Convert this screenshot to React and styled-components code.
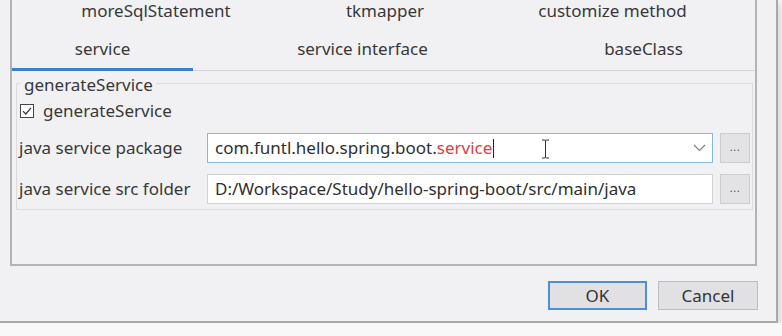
import React from 'react';
import styled, { createGlobalStyle } from 'styled-components';

const GlobalStyle = createGlobalStyle`
  html, body {
    margin: 0;
    padding: 0;
    background: #f8f8f9;
    overflow: hidden;
  }
  body {
    font-family: "Noto Sans", "Open Sans", sans-serif;
    font-size: 17px;
    line-height: 20px;
    color: #333;
  }
  * {
    box-sizing: border-box;
  }
`;

// the dialog's top and left edges are cropped off in the screenshot
const Dialog = styled.div`
  width: 778px;
  height: 323px;
  background: #f1f1f3;
  border-right: 2px solid #a9a9ab;
  border-bottom: 2px solid #a9a9ab;
  box-shadow: 2px 3px 8px rgba(0, 0, 0, 0.16);
  padding: 0 19px 0 10px;
  display: flex;
  flex-direction: column;
`;

const TabPane = styled.div`
  height: 266px;
  border: 2px solid #b3b3b5;
  border-top: none;
  display: flex;
  flex-direction: column;
`;

const TabHeader = styled.div`
  display: flex;
  flex-direction: column;
  border-bottom: 1px solid #d4d4d6;
`;

const TabRow = styled.div`
  display: flex;
  height: ${(p) => (p.$first ? 29 : 42)}px;
  padding-bottom: ${(p) => (p.$first ? 6 : 0)}px;
  margin-bottom: ${(p) => (p.$first ? 0 : -1)}px;
`;

const Tab = styled.div`
  flex: ${(p) => (p.$width ? `0 0 ${p.$width}px` : '1 1 0')};
  display: flex;
  align-items: center;
  justify-content: center;
  line-height: 23px;
  color: #383838;
  border-bottom: 3px solid ${(p) => (p.$active ? '#3b7fd0' : 'transparent')};
  white-space: nowrap;
`;

const TabBody = styled.div`
  padding: 1px 2px 0 4px;
`;

const GroupBox = styled.fieldset`
  margin: 0;
  border: 1px solid #dcdcde;
  padding: 0 2px 5px 2px;
  min-width: 0;
`;

const Legend = styled.legend`
  padding: 4px 3px 0;
  margin-left: 2px;
  color: #383838;
  line-height: 18px;
`;

const Rows = styled.div`
  display: flex;
  flex-direction: column;
  gap: 11px;
  padding-top: 6px;
`;

const CheckRow = styled.label`
  display: flex;
  align-items: center;
  gap: 9px;
  height: 22px;
  padding-left: 1px;
  color: #383838;
`;

const FieldRow = styled.div`
  display: grid;
  grid-template-columns: 181px 1fr 30px;
  column-gap: 7px;
  height: 30px;
  align-items: center;
`;

const FieldLabel = styled.span`
  color: #383838;
  white-space: nowrap;
`;

const Field = styled.div`
  position: relative;
  height: 30px;
  display: flex;
  align-items: center;
  background: #fff;
  border: 1px solid ${(p) => (p.$focused ? '#86b8e6' : '#d2d2d4')};
  padding: 0 6px 0 7px;
  color: #2f2f2f;
  white-space: nowrap;
  overflow: hidden;
`;

const Accent = styled.span`
  color: #d9423f;
`;

const Caret = styled.span`
  display: inline-block;
  width: 1px;
  height: 19px;
  background: #222;
  margin-left: 1px;
`;

const Spacer = styled.span`
  flex: 1;
`;

const Cursor = styled.svg`
  position: absolute;
  left: 333px;
  top: 5px;
`;

const BrowseButton = styled.button`
  width: 30px;
  height: 30px;
  padding: 0 0 4px;
  background: #e3e3e5;
  border: 1px solid #cdcdcf;
  color: #555;
  font-family: inherit;
  font-size: 11px;
  letter-spacing: 0.5px;
`;

const ButtonBar = styled.div`
  display: flex;
  justify-content: flex-end;
  gap: 11px;
  margin-top: 15px;
  margin-right: -1px;
`;

const DialogButton = styled.button`
  width: ${(p) => (p.$primary ? 99 : 100)}px;
  height: 29px;
  background: #e1e1e3;
  border: ${(p) => (p.$primary ? '2px solid #4b8fd9' : '1px solid #bdbdbf')};
  color: #333;
  font-family: inherit;
  font-size: 17px;
  padding: 0;
`;

function CheckIcon() {
  return (
    <svg width="14" height="14" viewBox="0 0 14 14">
      <rect x="0.5" y="0.5" width="13" height="13" fill="#fff" stroke="#444" />
      <path d="M3 7.2 L5.8 10 L11 3.8" fill="none" stroke="#333" strokeWidth="1.2" />
    </svg>
  );
}

function Chevron() {
  return (
    <svg width="13" height="8" viewBox="0 0 13 8">
      <path d="M1 1 L6.5 6.5 L12 1" fill="none" stroke="#808080" strokeWidth="1.2" />
    </svg>
  );
}

function IBeam() {
  return (
    <Cursor width="9" height="20" viewBox="0 0 9 20">
      <path
        d="M1 1 H3.5 Q4.5 1 4.5 2 V18 Q4.5 19 3.5 19 H1 M8 1 H5.5 Q4.5 1 4.5 2 M8 19 H5.5 Q4.5 19 4.5 18"
        fill="none"
        stroke="#333"
        strokeWidth="1"
      />
    </Cursor>
  );
}

const tabRows = [
  [
    { label: 'moreSqlStatement', width: 288 },
    { label: 'tkmapper', width: 170 },
    { label: 'customize method' },
  ],
  [
    { label: 'service', width: 181, active: true },
    { label: 'service interface', width: 339 },
    { label: 'baseClass' },
  ],
];

export default function App() {
  return (
    <>
      <GlobalStyle />
      <Dialog>
        <TabPane>
          <TabHeader>
            {tabRows.map((row, i) => (
              <TabRow key={i} $first={i === 0}>
                {row.map((t) => (
                  <Tab key={t.label} $width={t.width} $active={t.active}>
                    {t.label}
                  </Tab>
                ))}
              </TabRow>
            ))}
          </TabHeader>
          <TabBody>
            <GroupBox>
              <Legend>generateService</Legend>
              <Rows>
                <CheckRow>
                  <CheckIcon />
                  generateService
                </CheckRow>
                <FieldRow>
                  <FieldLabel>java service package</FieldLabel>
                  <Field $focused>
                    com.funtl.hello.spring.boot.<Accent>service</Accent>
                    <Caret />
                    <Spacer />
                    <Chevron />
                    <IBeam />
                  </Field>
                  <BrowseButton>...</BrowseButton>
                </FieldRow>
                <FieldRow>
                  <FieldLabel>java service src folder</FieldLabel>
                  <Field>D:/Workspace/Study/hello-spring-boot/src/main/java</Field>
                  <BrowseButton>...</BrowseButton>
                </FieldRow>
              </Rows>
            </GroupBox>
          </TabBody>
        </TabPane>
        <ButtonBar>
          <DialogButton $primary>OK</DialogButton>
          <DialogButton>Cancel</DialogButton>
        </ButtonBar>
      </Dialog>
    </>
  );
}
